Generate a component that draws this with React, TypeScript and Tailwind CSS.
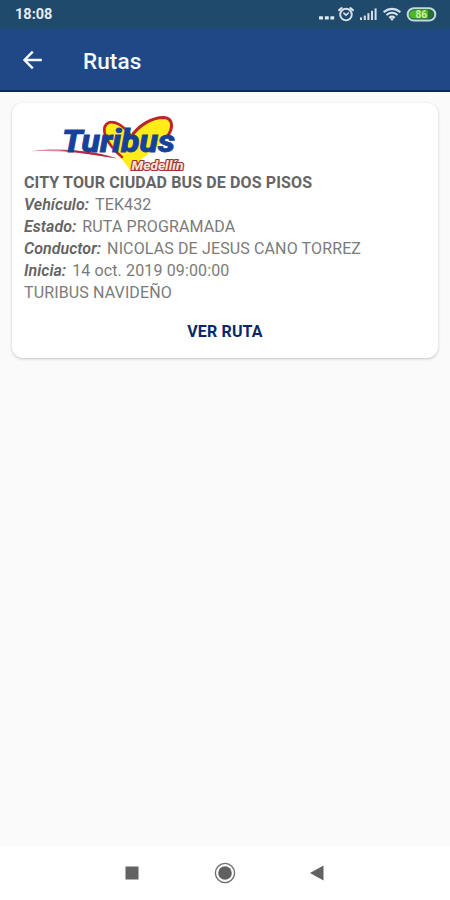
import type { ReactNode } from "react";

function StatusIcons() {
  return (
    <svg width="122" height="20" viewBox="316 4 122 20" className="block" fill="none">
      <g fill="#dfe9f0">
        <rect x="319" y="16.2" width="4" height="3.4" rx="0.5" />
        <rect x="324.8" y="16.2" width="4" height="3.4" rx="0.5" />
        <rect x="330.4" y="16.2" width="3.8" height="3.4" rx="0.5" />
      </g>
      <g stroke="#d6e3ec" strokeWidth="1.9" strokeLinecap="round">
        <circle cx="346" cy="14.6" r="5.8" />
        <path d="M339.2 10.2l2.4-2M352.8 10.2l-2.4-2" strokeWidth="2.2" />
        <path d="M343.8 13.2l2.2 2 2.4-2.2" strokeWidth="1.6" />
      </g>
      <g fill="#d3e0ea">
        <rect x="360" y="17.4" width="2" height="2.6" />
        <rect x="363.8" y="15.6" width="2" height="4.4" />
        <rect x="367.4" y="13.2" width="2" height="6.8" />
        <rect x="371" y="10.8" width="2" height="9.2" />
        <rect x="374.6" y="8.4" width="2" height="11.6" />
      </g>
      <g stroke="#d6e3ec" strokeWidth="2">
        <path d="M383.6 12.1q8.4-6.4 16.8 0" />
        <path d="M386.4 15q5.6-4.4 11.2 0" />
        <path d="M389.2 17.7q2.8-2.2 5.6 0" />
      </g>
      <path d="M389.8 18.2h4.4l-2.2 2.7z" fill="#dfe9f0" />
      <rect x="407.7" y="8.2" width="27.6" height="12.4" rx="6.2" stroke="#c0dcd8" strokeWidth="2" />
      <path d="M413.5 10.2h14.5v8.4h-14.5a4.2 4.2 0 0 1 0-8.4z" fill="#4eb81c" />
      <path d="M428 10.2h1.5a4.2 4.2 0 0 1 0 8.4H428z" fill="#28712f" />
      <text x="421.3" y="18.2" textAnchor="middle" fontSize="10" fontWeight="700" fill="#cdf0a4" className="font-['Roboto',sans-serif]">86</text>
    </svg>
  );
}

function TuribusLogo() {
  return (
    <svg width="170" height="66" viewBox="25 108 170 66" className="block" fill="none">
      <path
        d="M130 170C124 160 109 147 105 137C102 127 108 121 116 123C123 124 129 129 132 134C139 123 153 116 165 117C176 119 174 130 165 139C156 149 140 159 130 170z"
        fill="#ffec18"
      />
      <g stroke="#b9272d" strokeLinecap="round">
        <path d="M130 135C125 127 116 120.5 109 122.5C101 126 104 137 112 147C115 151 118 154 122 157" strokeWidth="2.6" />
        <path d="M131 137C138 126 151 117.5 164 117.5C174 118.5 173 129 167 137" strokeWidth="3" />
      </g>
      <path d="M31 151.3C58 147 82 150 112 157.5C84 152.5 57 150 31 151.3z" fill="#e08fa0" />
      <path d="M58 150.2C80 150 97 151.5 117 158.4C96 155.4 78 152.6 58 150.2z" fill="#ba263e" />
      <text
        x="62"
        y="152.2"
        textLength="113"
        lengthAdjust="spacingAndGlyphs"
        fontSize="31"
        fontWeight="800"
        fontStyle="italic"
        fill="#16419a"
        stroke="#16419a"
        strokeWidth="0.8"
        className="font-['Roboto',sans-serif]"
      >
        Turibus
      </text>
      <text
        x="131.5"
        y="170.2"
        textLength="52"
        lengthAdjust="spacingAndGlyphs"
        fontSize="12"
        fontWeight="800"
        fontStyle="italic"
        fill="#fbe3dc"
        stroke="#a03430"
        strokeWidth="2.2"
        strokeLinejoin="round"
        paintOrder="stroke"
        className="font-['Roboto',sans-serif]"
      >
        Medellín
      </text>
    </svg>
  );
}

function Field({ label, children }: { label: string; children: ReactNode }) {
  return (
    <p className="whitespace-nowrap">
      <span className="mr-[6px] font-semibold italic tracking-[0.03px] text-[#646464]">{label}</span>
      {children}
    </p>
  );
}

export default function App() {
  return (
    <div className="flex h-[900px] w-[450px] flex-col overflow-hidden bg-[#fafafa] font-['Roboto',sans-serif]">
      <div className="flex h-[29px] shrink-0 items-center justify-between bg-[#204a6c] pl-[15px] pr-3">
        <span className="mt-[2px] text-[14.5px] font-bold leading-none text-[#e5edf2]">18:08</span>
        <div className="-mt-px">
          <StatusIcons />
        </div>
      </div>
      <header className="flex h-[63px] shrink-0 items-center border-b-2 border-[#08276d] bg-[#214886] pl-[22px]">
        <svg width="22" height="22" viewBox="0 0 22 22" fill="none" stroke="#f4f7fb" strokeWidth="2.4">
          <path d="M19.8 11H3M10.8 2.7L2.5 11l8.3 8.3" />
        </svg>
        <h1 className="ml-[39px] mt-[3px] text-[22.5px] font-medium leading-7 tracking-[0.1px] text-[#f5f8fc]">Rutas</h1>
      </header>
      <main className="grow px-3 pt-[11px]">
        <section className="flex h-[255px] flex-col rounded-[11px] bg-white px-3 pt-[5px] shadow-[0_1px_3px_rgba(0,0,0,0.22)]">
          <div className="h-[64px] pl-px">
            <TuribusLogo />
          </div>
          <div className="text-[16px] leading-[22px] tracking-[0.13px] text-[#7b7b7b]">
            <h2 className="whitespace-nowrap font-bold text-[#656565]">CITY TOUR CIUDAD BUS DE DOS PISOS</h2>
            <Field label="Vehículo:">TEK432</Field>
            <Field label="Estado:">RUTA PROGRAMADA</Field>
            <Field label="Conductor:">NICOLAS DE JESUS CANO TORREZ</Field>
            <Field label="Inicia:">14 oct. 2019 09:00:00</Field>
            <p>TURIBUS NAVIDEÑO</p>
          </div>
          <button className="mt-[17px] text-[16px] font-bold leading-[22px] tracking-[0.15px] text-[#092869]">VER RUTA</button>
        </section>
      </main>
      <nav className="flex h-[54px] shrink-0 items-center bg-white pl-[125px]">
        <svg width="14" height="14" viewBox="0 0 14 14">
          <rect x="0.5" y="0.5" width="13" height="13" fill="#626262" />
        </svg>
        <svg width="22" height="22" viewBox="0 0 22 22" className="ml-[75px]">
          <circle cx="11" cy="11" r="9.6" fill="none" stroke="#707070" strokeWidth="1.4" />
          <circle cx="11" cy="11" r="6.8" fill="#606060" />
        </svg>
        <svg width="14" height="16" viewBox="0 0 14 16" className="ml-[74px]">
          <path d="M0 8L13.5 0.5v15z" fill="#626262" />
        </svg>
      </nav>
    </div>
  );
}
